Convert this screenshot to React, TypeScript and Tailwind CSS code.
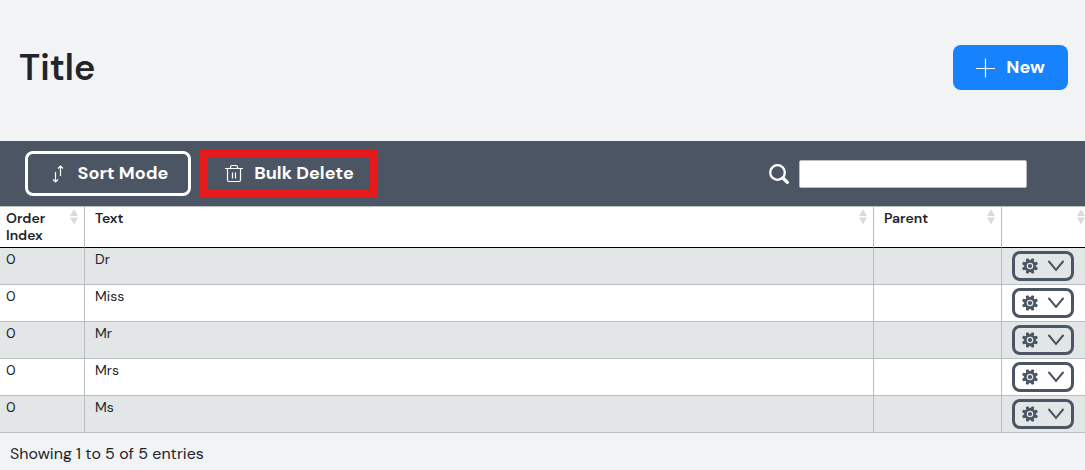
import type { ReactNode } from "react";

interface Entry {
  orderIndex: number;
  text: string;
  parent: string;
}

const entries: Entry[] = [
  { orderIndex: 0, text: "Dr", parent: "" },
  { orderIndex: 0, text: "Miss", parent: "" },
  { orderIndex: 0, text: "Mr", parent: "" },
  { orderIndex: 0, text: "Mrs", parent: "" },
  { orderIndex: 0, text: "Ms", parent: "" },
];

function PlusIcon() {
  return (
    <svg className="size-5" viewBox="0 0 20 20" stroke="currentColor" strokeWidth="1.2" aria-hidden="true">
      <path d="M9.500 .5v19M0 10.500h19" />
    </svg>
  );
}

function SwapIcon() {
  return (
    <svg className="size-5" viewBox="0 0 20 20" fill="none" stroke="currentColor" strokeWidth="1.2" aria-hidden="true">
      <path d="M7.5 8v10M5 15.5 7.5 18l2.500-2.500M12.500 12V2M10 4.500 12.500 2 15 4.500" />
    </svg>
  );
}

function TrashIcon() {
  return (
    <svg className="size-5" viewBox="0 0 20 20" fill="none" stroke="currentColor" strokeWidth="1.2" aria-hidden="true">
      <path d="M1 4.500h18M6.500 4.500V3c0-1 .5-1.500 1.500-1.500h4c1 0 1.500.5 1.500 1.500v1.500M3.500 4.500V16c0 1 .5 1.500 1.500 1.500h10c1 0 1.500-.5 1.500-1.500V4.500M8.500 8.500v6M11.500 8.500v6" />
    </svg>
  );
}

function SearchIcon() {
  return (
    <svg className="size-5" viewBox="0 0 20 20" fill="none" stroke="currentColor" aria-hidden="true">
      <circle cx="8.500" cy="8.500" r="7.300" strokeWidth="2.300" />
      <path d="m14 14 4.300 4.300" strokeWidth="3.300" strokeLinecap="round" />
    </svg>
  );
}

function CogIcon() {
  return (
    <svg className="size-4" viewBox="0 0 16 16" aria-hidden="true">
      <g fill="currentColor">
        <circle cx="8" cy="8" r="5.700" />
        {[0, 45, 90, 135].map((angle) => (
          <path key={angle} d="M6.800 0h2.400l.8 3v10l-.8 3H6.800L6 13V3z" transform={`rotate(${angle + 22.5} 8 8)`} />
        ))}
      </g>
      <circle cx="8" cy="8" r="2.700" fill="none" stroke="#e2e6e6" strokeWidth="1.200" />
    </svg>
  );
}

function ChevronIcon() {
  return (
    <svg className="size-4" viewBox="0 0 16 16" fill="none" stroke="currentColor" strokeWidth="2" strokeLinecap="round" aria-hidden="true">
      <path d="m1 3.500 7 8.500 7-8.500" />
    </svg>
  );
}

function SortArrows() {
  return (
    <svg className="h-4 w-2 shrink-0 text-[#d9dbdb]" viewBox="0 0 8 16" fill="currentColor" aria-hidden="true">
      <path d="M4-1l4 7H0zM0 7.500h8l-4 7z" />
    </svg>
  );
}

function HeaderCell({ children, className = "pl-2.5" }: { children?: ReactNode; className?: string }) {
  return (
    <th
      scope="col"
      className={`border-t border-b border-t-[#b9bfc1] border-b-black bg-white py-[3px] pr-1.5 text-left align-top font-semibold ${className}`}
    >
      <div className="flex items-start justify-between">
        <span>{children}</span>
        <SortArrows />
      </div>
    </th>
  );
}

export default function App() {
  return (
    <div className="min-h-screen bg-[#f1f3f5] font-['DM_Sans','Inter',sans-serif] text-[#212529]">
      <header className="flex items-center justify-between pt-[45px] pr-[17px] pb-[51px] pl-[19px]">
        <h1 className="text-[36px] leading-[45px] font-semibold">Title</h1>
        <button
          type="button"
          className="flex h-[45px] w-[115px] items-center justify-center gap-2.5 rounded-lg bg-[#1683fd] text-[18px] font-bold text-white"
        >
          <PlusIcon />
          New
        </button>
      </header>

      {/* Toolbar */}
      <div className="flex items-center justify-between bg-[#4c5564] py-2 pr-[58px] pl-[25px] text-white">
        <div className="flex items-center gap-[9px]">
          <button
            type="button"
            className="flex h-[45px] w-[166px] items-center justify-center gap-2.5 rounded-lg border-3 border-white text-[18px] font-bold"
          >
            <SwapIcon />
            Sort Mode
          </button>
          <button
            type="button"
            className="flex h-[49px] w-[178px] items-center justify-center gap-2.5 border-8 border-[#e61a1a] text-[18px] font-bold"
          >
            <TrashIcon />
            Bulk Delete
          </button>
        </div>
        <div className="flex items-center gap-2.5">
          <label htmlFor="search" aria-label="Search">
            <SearchIcon />
          </label>
          <input
            id="search"
            type="search"
            className="h-7 w-[228px] rounded-xs border border-[#b9bfc1] bg-white px-2 text-sm text-[#212529]"
          />
        </div>
      </div>

      <div className="overflow-hidden">
        <table className="w-[calc(100%+6px)] table-fixed border-separate border-spacing-0 text-[14px] leading-[17px]">
          <colgroup>
            <col className="w-[85px]" />
            <col />
            <col className="w-32" />
            <col className="w-[89px]" />
          </colgroup>
          <thead>
            <tr>
              <HeaderCell className="border-r border-r-[#b9bfc1] pl-1.5">Order Index</HeaderCell>
              <HeaderCell className="border-r border-r-[#b9bfc1] pl-2.5">Text</HeaderCell>
              <HeaderCell className="border-r border-r-[#b9bfc1] pl-2.5">Parent</HeaderCell>
              <HeaderCell />
            </tr>
          </thead>
          <tbody>
            {entries.map((entry) => (
              <tr key={entry.text} className="bg-white odd:bg-[#e2e6e6]">
                <td className="border-r border-b border-[#b9bfc1] py-[3px] pl-1.5 align-top">{entry.orderIndex}</td>
                <td className="border-r border-b border-[#b9bfc1] py-[3px] pl-2.5 align-top">{entry.text}</td>
                <td className="border-r border-b border-[#b9bfc1] py-[3px] pl-2.5 align-top">{entry.parent}</td>
                <td className="border-b border-[#b9bfc1] py-[3px] pl-2.5 align-top">
                  <button
                    type="button"
                    aria-label={`Options for ${entry.text}`}
                    className="flex h-[30px] w-[62px] items-center justify-center gap-2.5 rounded-lg border-3 border-[#4c5564] text-[#4c5564]"
                  >
                    <CogIcon />
                    <ChevronIcon />
                  </button>
                </td>
              </tr>
            ))}
          </tbody>
        </table>
      </div>

      <p className="px-2.5 pt-2.5 text-[16px] leading-[22px]">Showing 1 to 5 of 5 entries</p>
    </div>
  );
}
